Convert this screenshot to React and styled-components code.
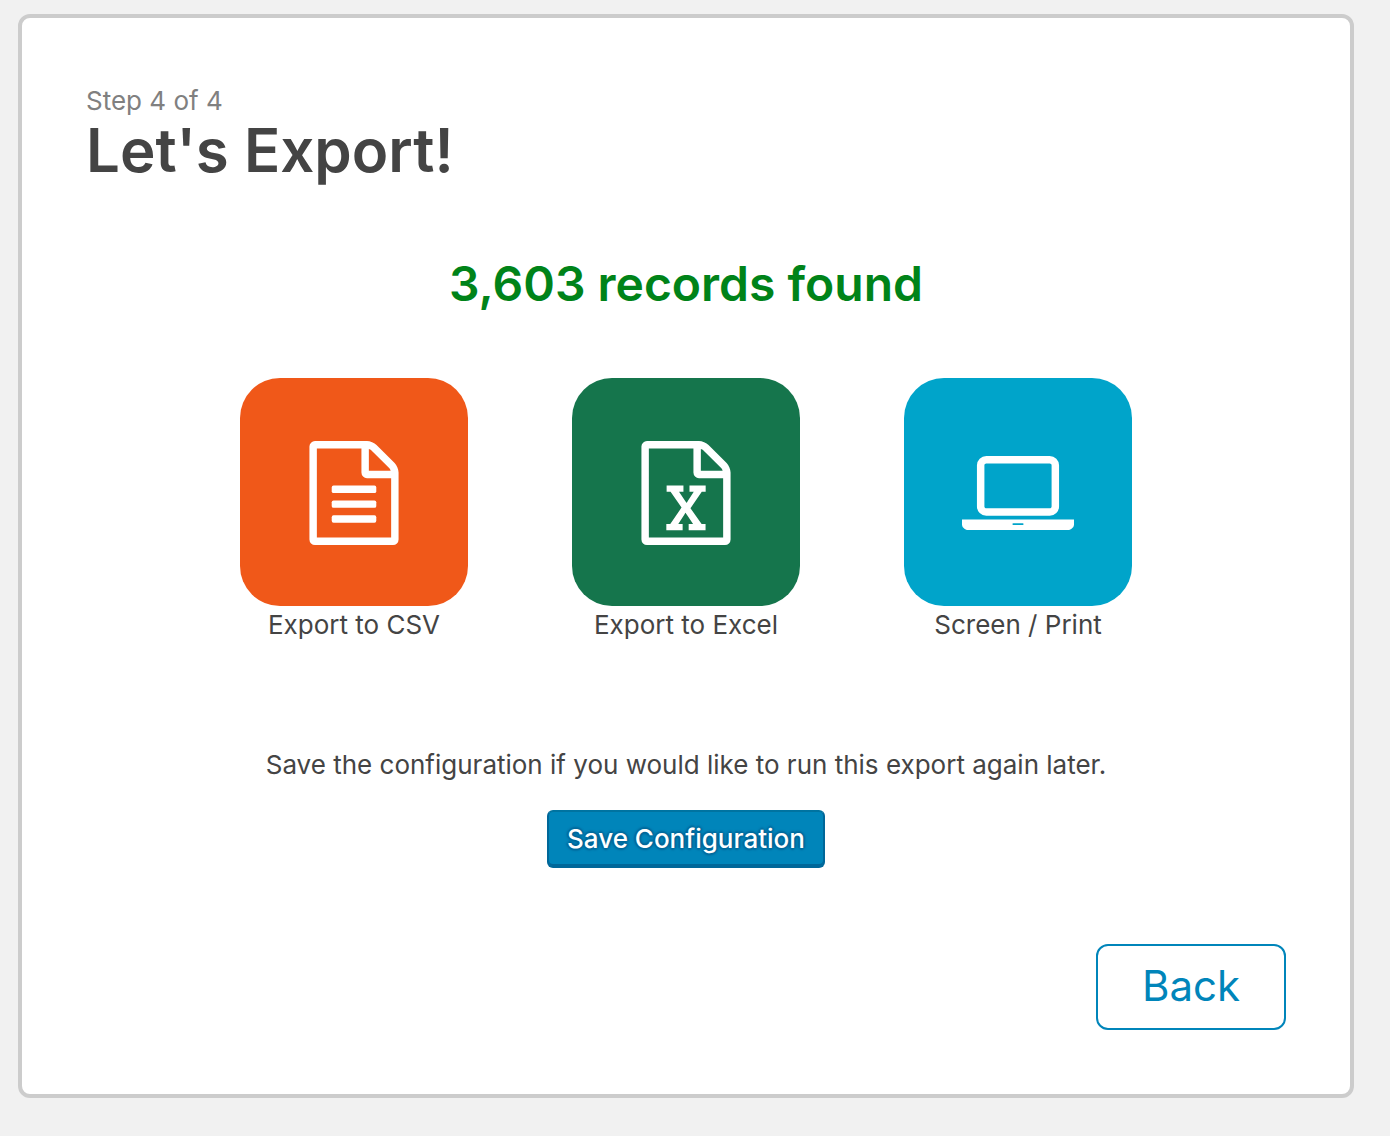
import React from "react";
import styled, { createGlobalStyle } from "styled-components";

const GlobalStyle = createGlobalStyle`
  *, *::before, *::after {
    box-sizing: border-box;
  }

  body {
    margin: 0;
    background: #f1f1f1;
    color: #444;
    font: 400 26px/38px Inter, "Noto Sans", "Liberation Sans", sans-serif;
  }
`;

const Page = styled.div`
  padding: 14px 36px 38px 18px;
`;

const Card = styled.main`
  display: flex;
  flex-direction: column;
  padding: 64px;
  background: #fff;
  border: 4px solid #ccc;
  border-radius: 12px;
`;

const Step = styled.p`
  margin: 0;
  color: #808080;
`;

const Title = styled.h1`
  margin: 0;
  font-size: 60px;
  font-weight: 600;
  line-height: 60px;
`;

const RecordCount = styled.h2`
  margin: 74px 0 64px;
  color: #008319;
  font-size: 48px;
  font-weight: 600;
  line-height: 60px;
  text-align: center;
`;

const Formats = styled.div`
  display: flex;
  flex-wrap: wrap;
  justify-content: center;
  gap: 104px;
`;

const FormatLink = styled.a`
  display: flex;
  flex-direction: column;
  align-items: center;
  width: 228px;
  color: inherit;
  text-decoration: none;
`;

const Tile = styled.span`
  display: flex;
  align-items: center;
  justify-content: center;
  width: 228px;
  height: 228px;
  padding-top: 2px;
  border-radius: 40px;
  background: ${({ $color }) => $color};
  color: #fff;
`;

const Icon = styled.svg`
  width: ${({ $width }) => $width}px;
  height: auto;
  fill: currentColor;
`;

const SaveSection = styled.section`
  display: flex;
  flex-direction: column;
  align-items: center;
  gap: 26px;
  margin: 102px 0 76px;
  text-align: center;
`;

const Note = styled.p`
  margin: 0;
`;

const SaveButton = styled.button`
  height: 58px;
  padding: 0 18px;
  border: 2px solid #0073a0;
  border-color: #0073a0 #006799 #006799;
  border-radius: 6px;
  background: #0085ba;
  box-shadow: inset 0 -2px 0 #006799;
  color: #fff;
  font: inherit;
  font-weight: 500;
  text-shadow: 0 -2px 2px #006799, 2px 0 2px #006799, 0 2px 2px #006799, -2px 0 2px #006799;
  cursor: pointer;
`;

const BackButton = styled.button`
  align-self: flex-end;
  width: 190px;
  height: 86px;
  padding: 0 0 2px;
  border: 2px solid #0085ba;
  border-radius: 12px;
  background: #fff;
  color: #0085ba;
  font: inherit;
  font-size: 42px;
  cursor: pointer;
`;

const PAGE_OUTLINE =
  "M1596 380q28 28 48 76t20 88v1152q0 40-28 68t-68 28h-1344q-40 0-68-28t-28-68v-1600q0-40 28-68t68-28h896q40 0 88 20t76 48zm-444-244v376h376q-10-29-22-41l-313-313q-12-12-41-22zm384 1528v-1024h-416q-40 0-68-28t-28-68v-416h-768v1536h1280z";

function CsvIcon() {
  return (
    <Icon $width={104} viewBox="0 0 1792 1792" aria-hidden="true">
      <path d={PAGE_OUTLINE} />
      <rect x="512" y="768" width="768" height="128" rx="32" />
      <rect x="512" y="1024" width="768" height="128" rx="32" />
      <rect x="512" y="1280" width="768" height="128" rx="32" />
    </Icon>
  );
}

function ExcelIcon() {
  return (
    <Icon $width={104} viewBox="0 0 1792 1792" aria-hidden="true">
      <path
        d={`${PAGE_OUTLINE}m-979-234v106h281v-106h-75l103-161q5-7 10-16.500t7.500-13.500 3.500-4h2q1 4 5 10 2 4 4.500 7.500t6 8 6.500 8.500l107 161h-76v106h291v-106h-68l-192-273 195-282h67v-107h-279v107h74l-103 159q-4 7-10 16.500t-9 13.500l-2 3h-2q-1-4-5-10-6-11-17-23l-106-159h76v-107h-290v107h68l189 272-194 283h-68z`}
      />
    </Icon>
  );
}

function LaptopIcon() {
  return (
    <Icon $width={112} viewBox="0 0 1920 1280" aria-hidden="true">
      <path
        fillRule="evenodd"
        d="M416 0h1088q66 0 113 47t47 113v704q0 66-47 113t-113 47h-1088q-66 0-113-47t-47-113v-704q0-66 47-113t113-47zM416 128q-13 0-22.500 9.500t-9.500 22.500v704q0 13 9.500 22.500t22.500 9.500h1088q13 0 22.500-9.500t9.500-22.500v-704q0-13-9.500-22.500t-22.500-9.500z"
      />
      <path
        fillRule="evenodd"
        d="M0 1088h1920v96q0 40-47 68t-113 28h-1600q-66 0-113-28t-47-68zM880 1152q-16 0-16 16t16 16h160q16 0 16-16t-16-16z"
      />
    </Icon>
  );
}

const FORMATS = [
  { label: "Export to CSV", color: "#f05819", Glyph: CsvIcon },
  { label: "Export to Excel", color: "#15754c", Glyph: ExcelIcon },
  { label: "Screen / Print", color: "#00a4ca", Glyph: LaptopIcon },
];

export default function App() {
  return (
    <Page>
      <GlobalStyle />
      <Card>
        <Step>Step 4 of 4</Step>
        <Title>Let's Export!</Title>
        <RecordCount>3,603 records found</RecordCount>
        <Formats>
          {FORMATS.map(({ label, color, Glyph }) => (
            <FormatLink key={label} href="#">
              <Tile $color={color}>
                <Glyph />
              </Tile>
              {label}
            </FormatLink>
          ))}
        </Formats>
        <SaveSection>
          <Note>Save the configuration if you would like to run this export again later.</Note>
          <SaveButton type="button">Save Configuration</SaveButton>
        </SaveSection>
        <BackButton type="button">Back</BackButton>
      </Card>
    </Page>
  );
}
